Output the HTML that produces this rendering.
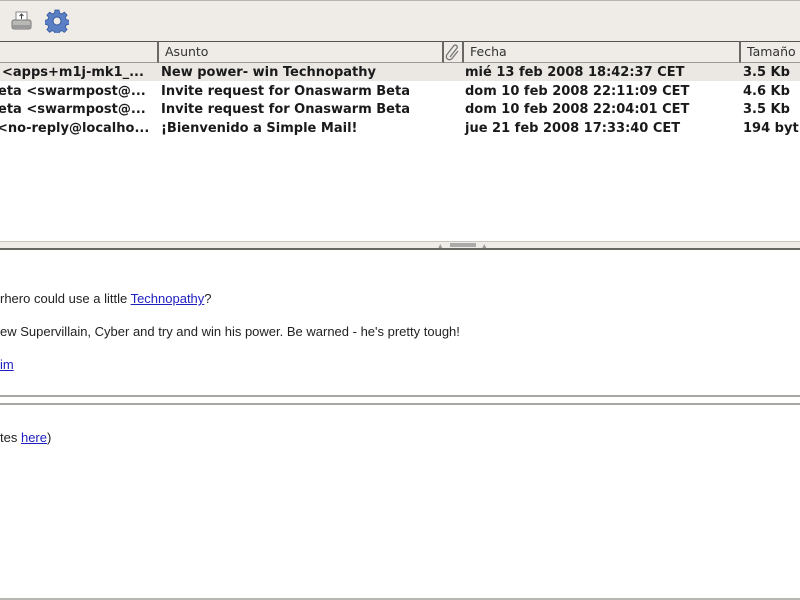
<!DOCTYPE html>
<html><head><style>
*{margin:0;padding:0;box-sizing:border-box}
body{width:800px;height:600px;overflow:hidden;background:#fff;font-family:"DejaVu Sans",sans-serif;position:relative}
.a{position:absolute}
.tb{left:0;top:0;width:800px;height:41px;background:#efebe7;border-top:1px solid #b8b4ae}
.hd{top:41px;height:22px;background:#efebe7;border-top:1px solid #555;border-bottom:1px solid #9c9a94;font-size:12.5px;color:#333;line-height:20px;padding-left:6px}
.hd.s{border-right:2px solid #6a6864}
.row{left:0;width:800px;height:18px;font-size:13px;font-weight:bold;color:#1a1a1a;line-height:18px;white-space:nowrap}
.row span{position:absolute;top:1px}
.body{font-family:"Liberation Sans",Arial,sans-serif;font-size:13px;color:#222}
a{color:#2020c0;text-decoration:underline}
</style></head><body>
<div class="a tb"></div>
<svg class="a" style="left:10px;top:10px" width="24" height="22" viewBox="0 0 24 22">
<rect x="6" y="2" width="11" height="9" fill="#fff" stroke="#888"/>
<path d="M11.5 4v5M9.5 6l2-2 2 2" stroke="#444" fill="none"/>
<rect x="2" y="10" width="19" height="9" rx="2" fill="#b8b8b4" stroke="#777"/>
<rect x="3" y="15" width="17" height="3" fill="#999"/>
</svg>
<svg class="a" style="left:45px;top:9px" width="24" height="24" viewBox="0 0 24 24">
<g fill="#5a7fc4" stroke="#34579a" stroke-width="0.8">
<path d="M10 1h4l.6 3 2.2 1 2.5-1.8 2.8 2.8-1.8 2.5 1 2.2 3 .6v4l-3 .6-1 2.2 1.8 2.5-2.8 2.8-2.5-1.8-2.2 1-.6 3h-4l-.6-3-2.2-1-2.5 1.8-2.8-2.8 1.8-2.5-1-2.2-3-.6v-4l3-.6 1-2.2-1.8-2.5 2.8-2.8 2.5 1.8 2.2-1z"/>
</g>
<circle cx="12" cy="12" r="4" fill="#efebe7" stroke="#34579a"/>
</svg>
<div class="a hd s" style="left:0;width:159px"></div>
<div class="a hd s" style="left:159px;width:285px">Asunto</div>
<div class="a hd s" style="left:444px;width:20px;padding:0"><svg width="18" height="20" viewBox="0 0 18 20"><path d="M6 15 L13 6 a2 2 0 0 0-3-2.5 L3 12.5 a3.2 3.2 0 0 0 5 4 L14 9" fill="none" stroke="#777" stroke-width="1.3"/></svg></div>
<div class="a hd s" style="left:464px;width:277px">Fecha</div>
<div class="a hd" style="left:741px;width:59px">Tamaño</div>
<div class="a row" style="top:63px;background:#ebe8e4"><span style="left:2px">&lt;apps+m1j-mk1_...</span><span style="left:161px">New power- win Technopathy</span><span style="left:465px">mié 13 feb 2008 18:42:37 CET</span><span style="left:743px">3.5 Kb</span></div>
<div class="a row" style="top:82px"><span style="left:-2px">eta &lt;swarmpost@...</span><span style="left:161px">Invite request for Onaswarm Beta</span><span style="left:465px">dom 10 feb 2008 22:11:09 CET</span><span style="left:743px">4.6 Kb</span></div>
<div class="a row" style="top:100px"><span style="left:-2px">eta &lt;swarmpost@...</span><span style="left:161px">Invite request for Onaswarm Beta</span><span style="left:465px">dom 10 feb 2008 22:04:01 CET</span><span style="left:743px">3.5 Kb</span></div>
<div class="a row" style="top:119px"><span style="left:-3px">&lt;no-reply@localho...</span><span style="left:161px">¡Bienvenido a Simple Mail!</span><span style="left:465px">jue 21 feb 2008 17:33:40 CET</span><span style="left:743px">194 byt</span></div>
<div class="a" style="left:0;top:241px;width:800px;height:7px;background:#efebe7;border-top:1px solid #c8c4be"></div>
<div class="a" style="left:450px;top:243px;width:26px;height:4px;background:#aaa"></div>
<div class="a" style="left:438px;top:243px;font-size:6px;color:#999">▲</div>
<div class="a" style="left:482px;top:243px;font-size:6px;color:#999">▲</div>
<div class="a" style="left:0;top:248px;width:800px;height:2px;background:#6a6864"></div>
<div class="a body" style="left:0;top:291px">rhero could use a little <a>Technopathy</a>?</div>
<div class="a body" style="left:0;top:324px">ew Supervillain, Cyber and try and win his power. Be warned - he's pretty tough!</div>
<div class="a body" style="left:0;top:357px"><a>im</a></div>
<div class="a" style="left:0;top:395px;width:800px;height:2px;background:#a8a6a2"></div>
<div class="a" style="left:0;top:403px;width:800px;height:2px;background:#a8a6a2"></div>
<div class="a body" style="left:0;top:430px">tes <a>here</a>)</div>
<div class="a" style="left:0;top:598px;width:800px;height:2px;background:#b8b6b2"></div>
</body></html>
